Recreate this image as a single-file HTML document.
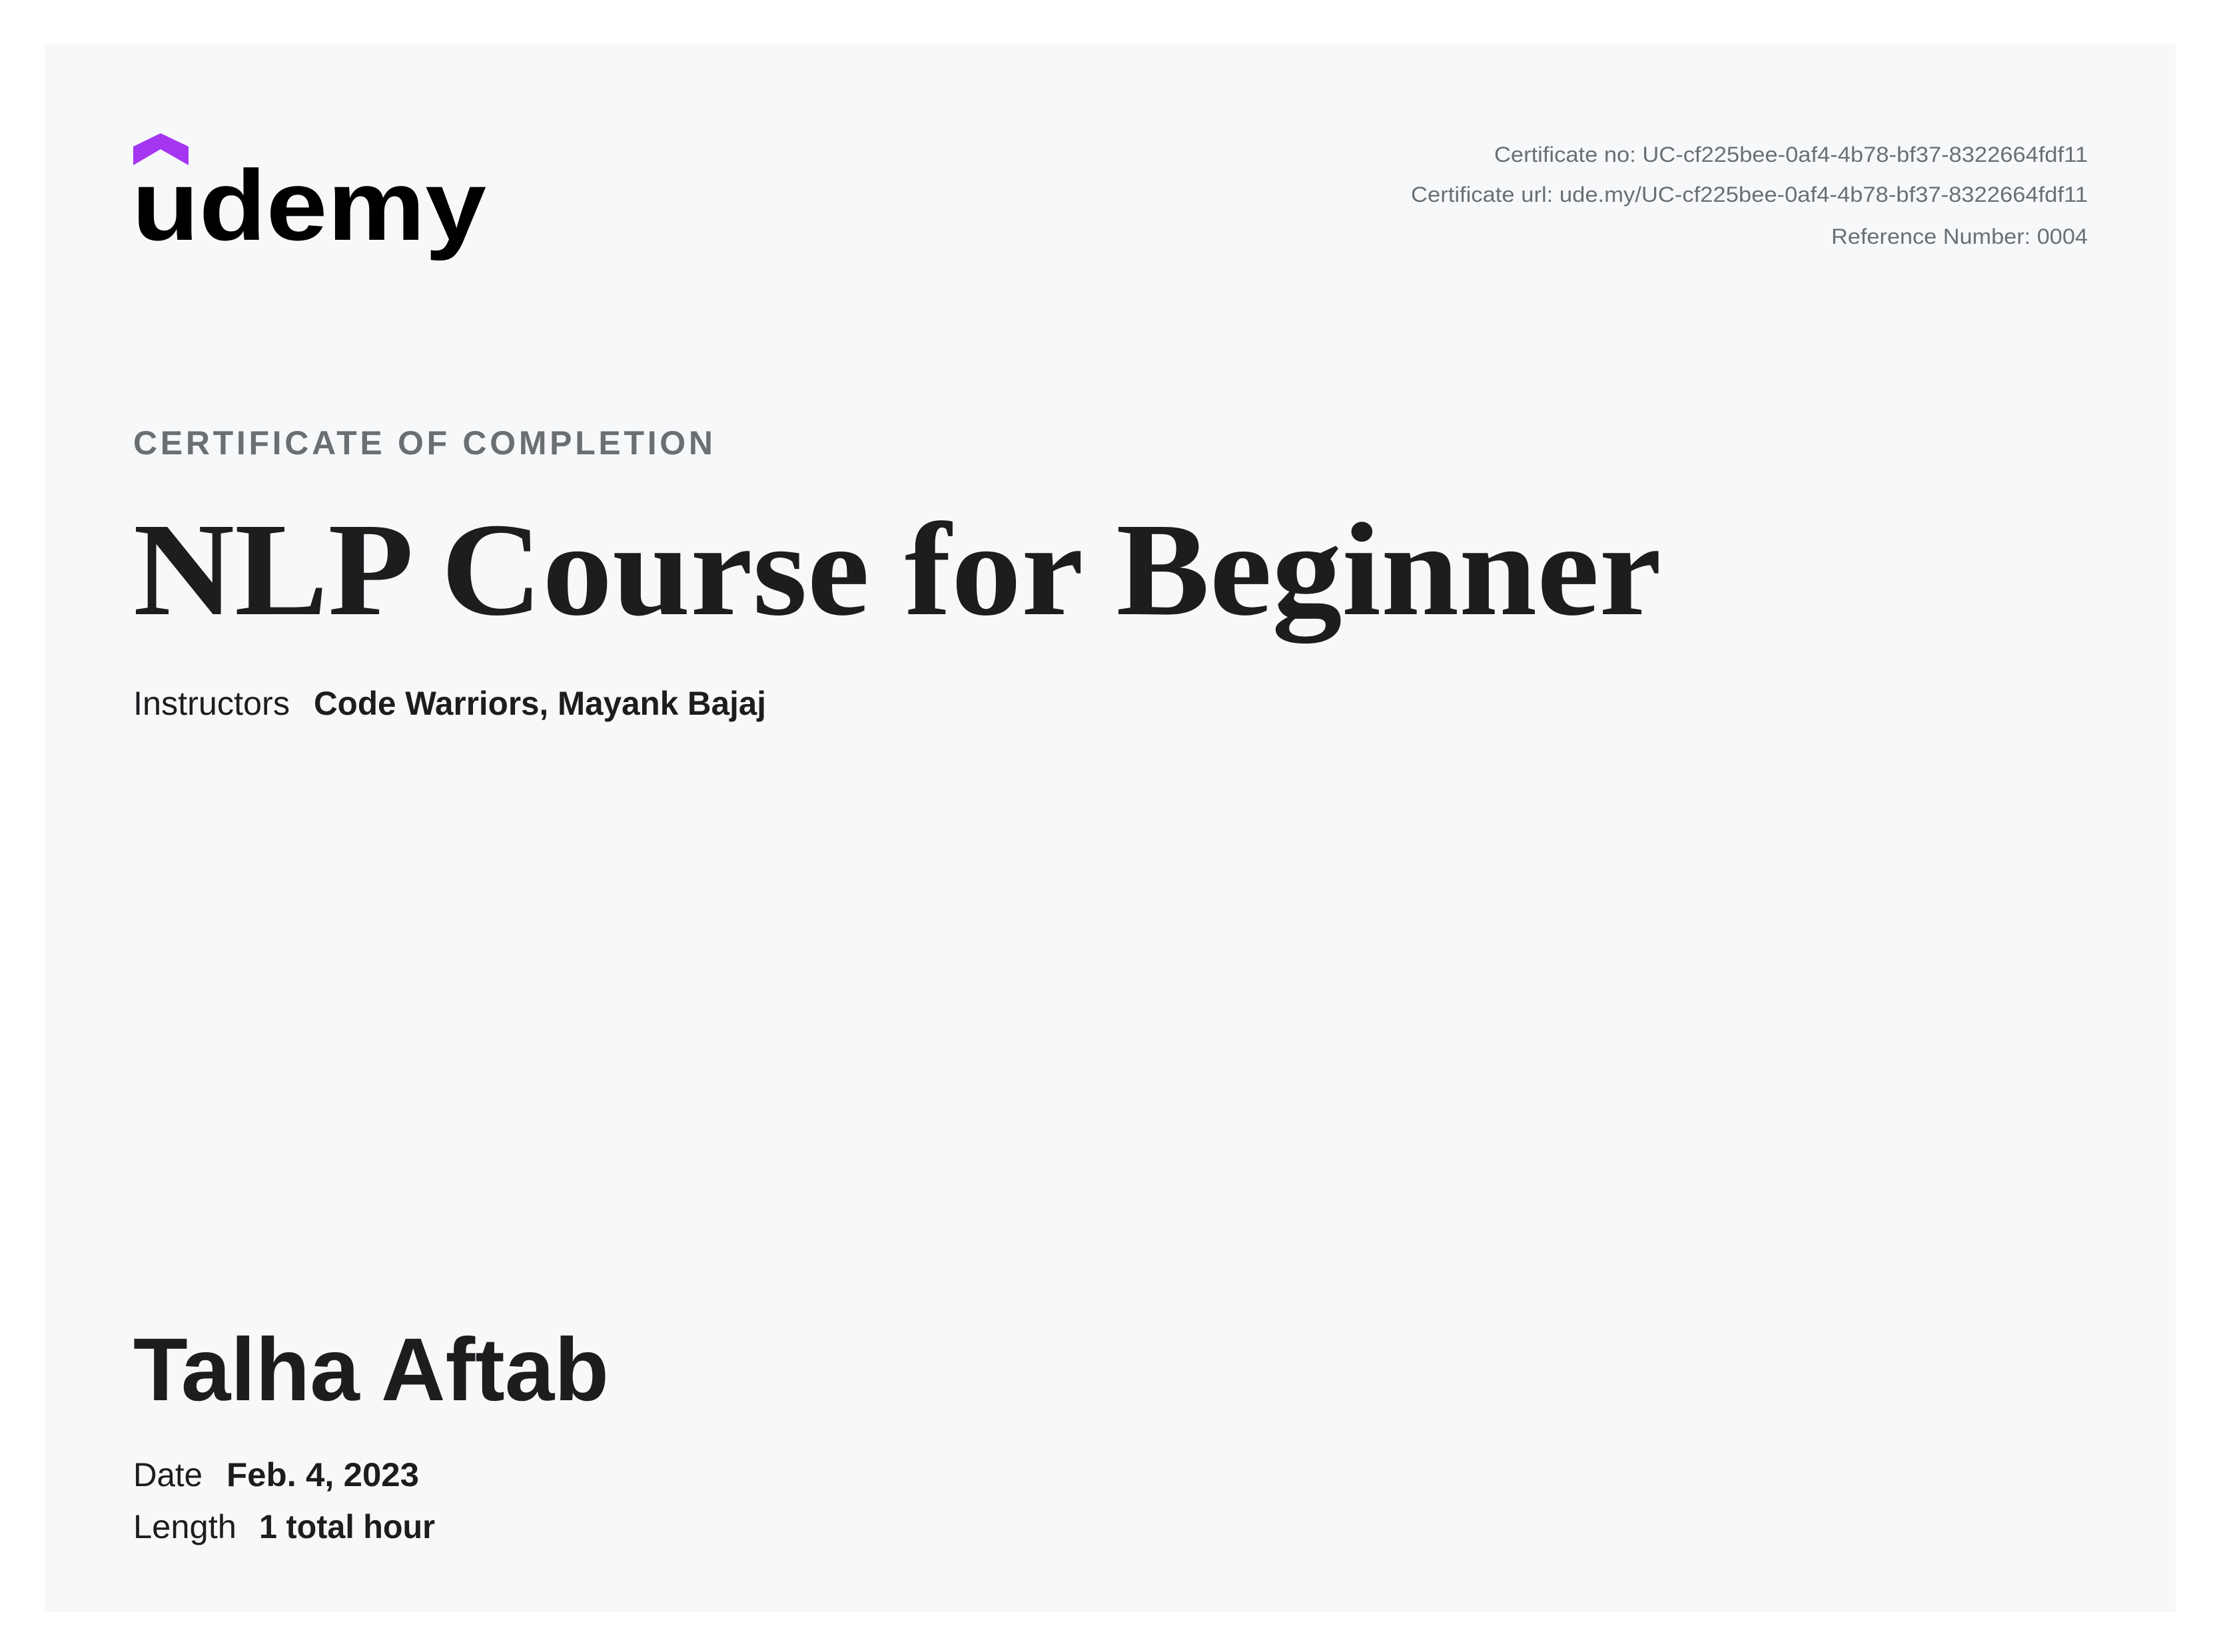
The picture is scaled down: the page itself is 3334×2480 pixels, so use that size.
<!DOCTYPE html>
<html><head><meta charset="utf-8"><style>
html,body{margin:0;padding:0;background:#fff;width:3334px;height:2480px;overflow:hidden}
svg{display:block}
</style></head><body>
<svg width="3334" height="2480" viewBox="0 0 3334 2480" xmlns="http://www.w3.org/2000/svg">
<rect x="0" y="0" width="3334" height="2480" fill="#ffffff"/>
<rect x="67" y="67" width="3199" height="2353" fill="#f7f8fa"/>
<polygon points="200,220 241,200 283,220 283,248 241,224 200,248" fill="#a435f0"/>
<text x="198" y="360" font-family="Liberation Sans, sans-serif" font-weight="bold" font-size="150" fill="#000" textLength="532" lengthAdjust="spacingAndGlyphs">udemy</text>
<g font-family="Liberation Sans, sans-serif" font-size="32" fill="#6a6f73" text-anchor="end">
<text x="3134" y="243" textLength="891" lengthAdjust="spacingAndGlyphs">Certificate no: UC-cf225bee-0af4-4b78-bf37-8322664fdf11</text>
<text x="3134" y="303" textLength="1016" lengthAdjust="spacingAndGlyphs">Certificate url: ude.my/UC-cf225bee-0af4-4b78-bf37-8322664fdf11</text>
<text x="3134" y="366" textLength="385" lengthAdjust="spacingAndGlyphs">Reference Number: 0004</text>
</g>
<text x="200" y="682" font-family="Liberation Sans, sans-serif" font-weight="bold" font-size="50" fill="#6a6f73" textLength="870" lengthAdjust="spacing">CERTIFICATE OF COMPLETION</text>
<text x="200" y="922" font-family="Liberation Serif, serif" font-weight="bold" font-size="200" fill="#1c1d1f" textLength="2294" lengthAdjust="spacingAndGlyphs">NLP Course for Beginner</text>
<g font-family="Liberation Sans, sans-serif" font-size="50" fill="#1c1d1f">
<text x="200" y="1073" textLength="235" lengthAdjust="spacingAndGlyphs">Instructors</text>
<text x="471" y="1073" font-weight="bold" textLength="679" lengthAdjust="spacingAndGlyphs">Code Warriors,  Mayank Bajaj</text>
<text x="200" y="2231" textLength="104" lengthAdjust="spacingAndGlyphs">Date</text>
<text x="340" y="2231" font-weight="bold" textLength="289" lengthAdjust="spacingAndGlyphs">Feb. 4, 2023</text>
<text x="200" y="2309" textLength="155" lengthAdjust="spacingAndGlyphs">Length</text>
<text x="389" y="2309" font-weight="bold" textLength="264" lengthAdjust="spacingAndGlyphs">1 total hour</text>
</g>
<text x="200" y="2102" font-family="Liberation Sans, sans-serif" font-weight="bold" font-size="134" fill="#1c1d1f" textLength="714" lengthAdjust="spacingAndGlyphs">Talha Aftab</text>
</svg>
</body></html>
